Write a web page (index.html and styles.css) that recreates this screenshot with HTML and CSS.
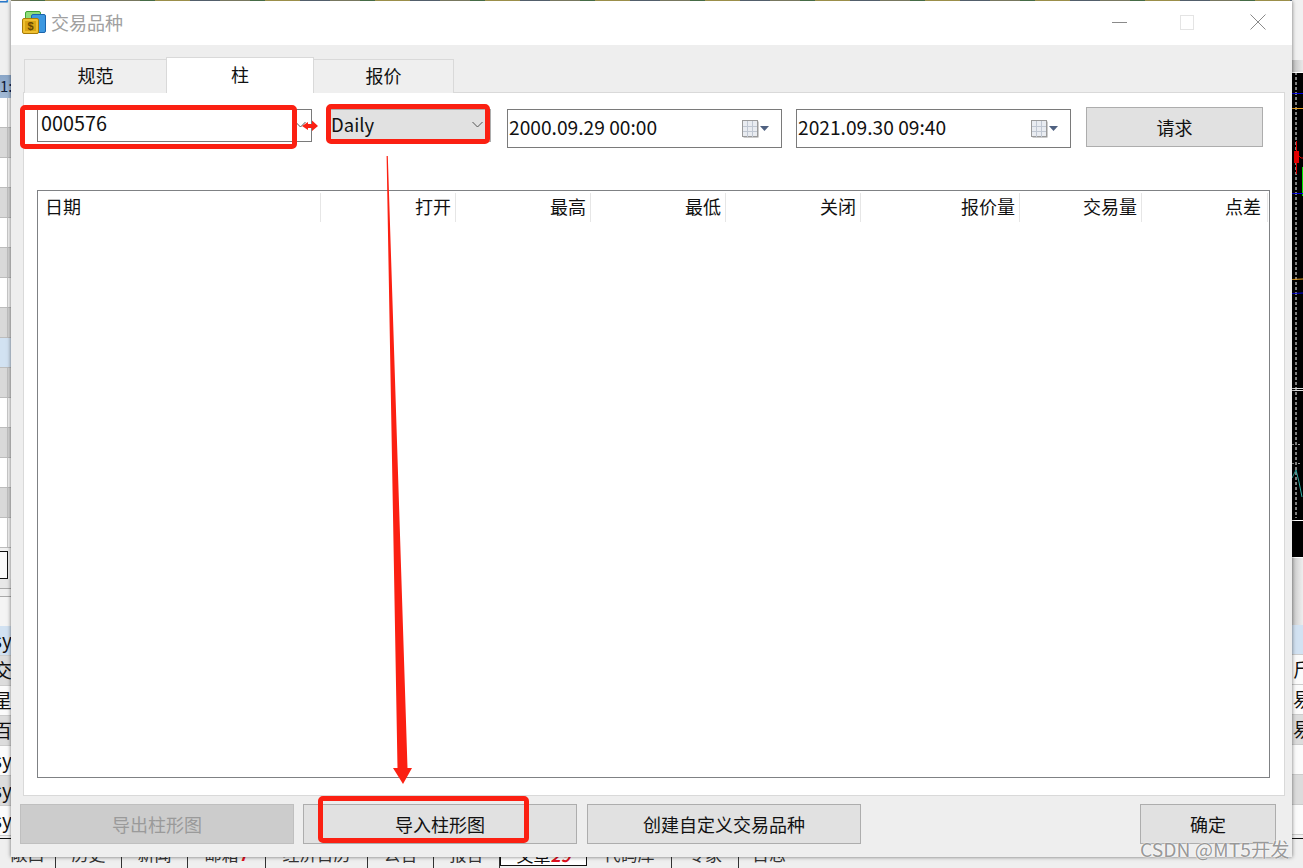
FILE: index.html
```html
<!DOCTYPE html>
<html lang="zh-CN">
<head>
<meta charset="utf-8">
<title>交易品种</title>
<link rel="stylesheet" href="styles.css">
</head>
<body>
<div class="desk">
  <div class="topline"></div>
  <div class="strip strip-left">
    <div class="top-bits"><span class="blue-glyph">尸</span></div>
    <div class="list-head">1:</div>
    <div class="row"></div><div class="row g"></div><div class="row"></div><div class="row g"></div><div class="row"></div><div class="row g"></div><div class="row"></div><div class="row g"></div><div class="row b"></div><div class="row g"></div><div class="row"></div><div class="row g"></div><div class="row"></div><div class="row g"></div><div class="row"></div>
    <div class="mini-box"></div>
    <div class="rule-block"></div>
    <div class="log-row b">sy</div>
    <div class="log-row g">交易</div>
    <div class="log-row">星期</div>
    <div class="log-row g">百利</div>
    <div class="log-row">sy</div>
    <div class="log-row g">sy</div>
    <div class="log-row">sy</div>
  </div>
  <div class="strip strip-right">
    <div class="chart-top"></div>
    <div class="chart">
      <svg class="chart-svg" width="11" height="486" viewBox="0 0 11 486">
        <rect x="0" y="0" width="11" height="486" fill="#000"/>
        <line x1="0" y1="0.5" x2="11" y2="0.5" stroke="#fff"/>
        <line x1="4" y1="0" x2="4" y2="446" stroke="#fff" stroke-dasharray="3 2"/>
        <line x1="0" y1="21.5" x2="11" y2="21.5" stroke="#0000e0"/>
        <line x1="0" y1="36.5" x2="11" y2="36.5" stroke="#e8a020"/>
        <line x1="4.5" y1="69" x2="4.5" y2="102" stroke="#e00000"/>
        <rect x="2" y="79" width="5" height="12" fill="#e60000"/>
        <path d="M7 84 L9 86 L11 86" stroke="#e00000" fill="none"/>
        <rect x="10" y="95" width="1" height="29" fill="#00e000"/>
        <line x1="0" y1="121.5" x2="11" y2="121.5" stroke="#0000e0"/>
        <line x1="0" y1="207.5" x2="11" y2="207" stroke="#e8a020"/>
        <line x1="0" y1="221.5" x2="11" y2="221" stroke="#0000e0"/>
        <line x1="0" y1="316.5" x2="11" y2="316.5" stroke="#ddd"/>
        <line x1="0" y1="318.5" x2="11" y2="318.5" stroke="#ddd"/>
        <line x1="0" y1="372.5" x2="11" y2="372.5" stroke="#999" stroke-dasharray="2 4"/>
        <line x1="0" y1="391.5" x2="11" y2="391.5" stroke="#999" stroke-dasharray="2 4"/>
        <path d="M0 406 L4 398 L7 410 L10 425" stroke="#2fa8a0" fill="none"/>
        <line x1="0" y1="448.5" x2="11" y2="448.5" stroke="#fff"/>
        <line x1="0" y1="485.5" x2="11" y2="485.5" stroke="#fff"/>
      </svg>
    </div>
    <div class="spacer-right"></div>
    <div class="log-row b"></div>
    <div class="log-row"><span class="log-r">斤</span></div>
    <div class="log-row"><span class="log-r">易</span></div>
    <div class="log-row g"><span class="log-r">易</span></div>
    <div class="log-row"></div>
    <div class="log-row g"></div>
    <div class="log-row"></div>
  </div>
  <div class="bottom-tabs">
    <span class="btab w55">敞口</span>
    <span class="btab w66">历史</span>
    <span class="btab w66">新闻</span>
    <span class="btab w78">邮箱<b>7</b></span>
    <span class="btab w102">经济日历</span>
    <span class="btab w66">公告</span>
    <span class="btab w66">报告</span>
    <span class="btab active">文章<b>29</b></span>
    <span class="btab w85">代码库</span>
    <span class="btab w67">专家</span>
    <span class="btab last">日志</span>
  </div>

  <div class="dialog">
    <header class="titlebar">
      <svg class="app-icon" width="25" height="25" viewBox="0 0 25 25">
        <rect x="3.5" y="1.5" width="15" height="14" rx="1.5" fill="#8fdc7a" stroke="#3fa336"/>
        <rect x="9.5" y="4.5" width="14" height="18" rx="1.5" fill="#3d98e0" stroke="#1b64ac"/>
        <rect x="0.5" y="8.5" width="16" height="15" rx="1.5" fill="#f0c030" stroke="#a87c08"/>
        <rect x="3" y="11" width="11" height="10" fill="#d8a414"/>
        <text x="8.5" y="20" class="dollar">$</text>
      </svg>
      <span class="title">交易品种</span>
      <div class="controls">
        <span class="ctl-min"></span>
        <span class="ctl-max"></span>
        <svg class="ctl-close" width="16" height="16" viewBox="0 0 16 16"><path d="M0.5 0.5 L15.5 15.5 M15.5 0.5 L0.5 15.5" stroke="#8a8a8a" fill="none"/></svg>
      </div>
    </header>
    <div class="content">
      <nav class="tabs">
        <span class="tab t1">规范</span>
        <span class="tab on">柱</span>
        <span class="tab t3">报价</span>
      </nav>
      <section class="panel">
        <div class="toolbar">
          <div class="combo symbol"><span class="val">000576</span>
            <svg class="chev" width="11" height="7" viewBox="0 0 11 7"><path d="M0.5 1 L5.5 6 L10.5 1" fill="none" stroke="#555"/></svg>
          </div>
          <div class="combo period"><span class="val">Daily</span>
            <svg class="chev" width="11" height="7" viewBox="0 0 11 7"><path d="M0.5 1 L5.5 6 L10.5 1" fill="none" stroke="#555"/></svg>
          </div>
          <div class="date d1"><span class="val">2000.09.29 00:00</span>
            <svg width="28" height="18" viewBox="0 0 28 18" class="cal"><rect x="1.5" y="1.5" width="15" height="16" fill="#9a9a9a"/><rect x="0.5" y="0.5" width="15" height="16" fill="#e9ecf1" stroke="#9a9a9a"/><path d="M5.5 1V17M10.5 1V17M1 6.5H15M1 11.5H15" stroke="#c0c7d2"/><path d="M18 6H27L22.5 11Z" fill="#4f6180"/></svg>
          </div>
          <div class="date d2"><span class="val">2021.09.30 09:40</span>
            <svg width="28" height="18" viewBox="0 0 28 18" class="cal"><rect x="1.5" y="1.5" width="15" height="16" fill="#9a9a9a"/><rect x="0.5" y="0.5" width="15" height="16" fill="#e9ecf1" stroke="#9a9a9a"/><path d="M5.5 1V17M10.5 1V17M1 6.5H15M1 11.5H15" stroke="#c0c7d2"/><path d="M18 6H27L22.5 11Z" fill="#4f6180"/></svg>
          </div>
          <button class="btn req">请求</button>
        </div>
        <div class="table">
          <div class="thead">
            <span class="th c-date">日期</span>
            <span class="th c135">打开</span>
            <span class="th c135">最高</span>
            <span class="th c135">最低</span>
            <span class="th c135">关闭</span>
            <span class="th c159">报价量</span>
            <span class="th c122">交易量</span>
            <span class="th c126">点差</span>
          </div>
        </div>
      </section>
      <footer class="actions">
        <button class="btn wide off">导出柱形图</button>
        <button class="btn wide">导入柱形图</button>
        <button class="btn wide">创建自定义交易品种</button>
        <button class="btn ok">确定</button>
      </footer>
    </div>
  </div>

  <div class="mark m1"></div>
  <div class="mark m2"></div>
  <div class="mark m3"></div>
  <svg class="arrows" width="1303" height="868" viewBox="0 0 1303 868">
    <path d="M386.6 156 L387.8 156 L407.5 768 L412 768 L403 784 L393 768 L397.5 768 Z" fill="#fb2012"/>
    <path d="M302 126 L308 122 L308 124 L312 124 L312 120.5 L318 126 L312 131 L312 128 L308 128 L308 130 Z" fill="#fb2012"/>
  </svg>
  <div class="watermark">CSDN @MT5开发</div>
</div>
</body>
</html>
```
FILE: styles.css
```css
* { box-sizing: border-box; }
html, body { margin: 0; padding: 0; }
body { width: 1303px; height: 868px; overflow: hidden; background: #e9e9e9; font-family: "Noto Sans CJK SC", "Noto Sans", sans-serif; color: #111; }
.desk { position: relative; width: 1303px; height: 868px; overflow: hidden; }

/* application behind the dialog */
.topline { position: absolute; left: 0; top: 0; width: 1303px; height: 1px; background: repeating-linear-gradient(90deg, #9a9a7a 0 30px, #5a8a5a 30px 45px, #c8b860 45px 80px, #6a7a8a 80px 110px); }
.strip { position: absolute; top: 0; width: 11px; height: 868px; overflow: hidden; display: flex; flex-direction: column; background: #f1f1f1; }
.strip-left { left: 0; }
.strip-right { right: 0; }
.top-bits { height: 75px; flex: none; background: #f0f0f0; }
.blue-glyph { display: block; color: #2a78c8; font-size: 18px; line-height: 18px; margin-top: -6px; margin-left: -8px; }
.list-head { height: 23px; flex: none; background: linear-gradient(#8aa6c8, #a4bbd6); font-size: 15px; line-height: 22px; color: #10203a; }
.row { height: 30px; flex: none; background: linear-gradient(90deg, #fff 0 7px, #c8c8c8 7px 8px, #f4f4f4 8px); border-bottom: 1px solid #bdbdbd; }
.row.g { background: linear-gradient(90deg, #d9d9d9 0 7px, #c0c0c0 7px 8px, #d4d4d4 8px); }
.row.b { background: #d2e2f2; }
.mini-box { height: 28px; width: 8px; flex: none; background: #fafafa; border: 1px solid #111; border-left: 0; margin-top: 3px; }
.rule-block { height: 47px; flex: none; background: linear-gradient(#e8e8e8 0 9px, #aaa 9px 10px, #efefef 10px 17px, #aaa 17px 18px, #f4f4f4 18px); }
.log-row { height: 30px; flex: none; background: #fbfbfb; font-size: 19px; line-height: 28px; white-space: nowrap; overflow: hidden; border-bottom: 1px solid #ccc; margin-left: -7px; }
.log-row.g { background: #dcdcdc; }
.log-row.b { background: #d2e2f2; }
.strip-right .log-row { margin-left: 0; }
.log-r { display: block; margin-left: 1px; }
.chart-top { height: 12px; flex: none; margin-top: 60px; background: linear-gradient(90deg, #c0c0c0, #e8e8e8); }
.chart { height: 486px; flex: none; }
.chart-svg { display: block; }
.spacer-right { height: 67px; flex: none; background: linear-gradient(90deg, #c8c8c8, #eee); }
.bottom-tabs { position: absolute; left: 0; top: 838px; width: 1303px; height: 30px; display: flex; align-items: stretch; border-top: 1px solid #111; background: #efefef; font-size: 17px; color: #333; }
.btab { display: block; flex: none; text-align: center; line-height: 29px; border-right: 1px solid #333; }
.btab b { color: #e01020; font-weight: 700; font-style: italic; }
.w55 { width: 56px; } .w66 { width: 66px; } .w78 { width: 78px; } .w102 { width: 102px; } .w85 { width: 85px; } .w67 { width: 67px; }
.btab.active { width: 87px; background: #fff; border: 1px solid #111; color: #111; margin-bottom: 2px; }
.btab.last { width: 60px; border-right: 0; }

/* dialog */
.dialog { position: absolute; left: 11px; top: 1px; width: 1281px; height: 856px; background: #eee; box-shadow: 0 0 4px rgba(0,0,0,.55); display: flex; flex-direction: column; }
.titlebar { height: 44px; flex: none; background: #fff; display: flex; align-items: center; padding: 0 0 2px 11px; }
.app-icon { flex: none; }
.title { margin-left: 4px; font-size: 18px; color: #a0a0a0; line-height: 24px; }
.controls { margin-left: auto; display: flex; align-items: center; }
.ctl-min { display: block; width: 15px; height: 1px; background: #8a8a8a; margin-right: 55px; }
.ctl-max { display: block; width: 14px; height: 15px; border: 1px solid #e4e4e4; margin-right: 57px; margin-left: -2px; }
.ctl-close { display: block; margin-right: 26px; margin-left: -1px; }
.content { flex: 1; display: flex; flex-direction: column; padding: 13px 7px 0 12px; }
.tabs { display: flex; height: 35px; flex: none; padding-left: 1px; align-items: flex-end; position: relative; z-index: 1; margin-bottom: -1px; }
.tab { display: block; text-align: center; font-size: 18px; }
.t1 { width: 142px; height: 34px; line-height: 31px; background: #efefef; border: 1px solid #d9d9d9; border-bottom: 0; border-right: 0; }
.on { width: 148px; height: 36px; line-height: 32px; background: #fff; border: 1px solid #d9d9d9; border-bottom: 0; }
.t3 { width: 140px; height: 34px; line-height: 31px; background: #efefef; border: 1px solid #d9d9d9; border-bottom: 0; border-left: 0; }
.panel { height: 704px; flex: none; background: #fff; border: 1px solid #d9d9d9; padding: 14px 0 0 13px; }
.toolbar { display: flex; align-items: flex-start; height: 41px; }
.combo { height: 33px; margin-top: 2px; display: flex; align-items: center; justify-content: space-between; border: 1px solid #7a7a7a; }
.symbol { width: 275px; background: #fff; padding: 0 5px 0 3px; font-size: 19.8px; }
.symbol .val { margin-bottom: 5px; }
.period { width: 164px; margin-left: 15px; background: #e1e1e1; border-color: #adadad; padding: 0 7px 0 3px; font-size: 18.5px; }
.period .val { margin-bottom: 4px; }
.val { display: block; white-space: nowrap; line-height: 26px; }
.chev { display: block; flex: none; margin-bottom: 3px; }
.date { width: 275px; height: 39px; margin-top: 2px; display: flex; align-items: center; justify-content: space-between; border: 1px solid #7a7a7a; background: #fff; font-size: 19.2px; padding: 0 11px 0 1px; }
.date .val { margin-bottom: 3px; }
.d1 { margin-left: 16px; }
.d2 { margin-left: 14px; }
.cal { display: block; flex: none; }
.btn { display: block; background: #e1e1e1; border: 1px solid #adadad; font: 18px "Noto Sans CJK SC", "Noto Sans", sans-serif; color: #111; padding: 0; }
.req { width: 177px; height: 40px; margin-left: 15px; }
.table { width: 1233px; height: 588px; margin-top: 42px; border: 1px solid #7f8184; background: #fff; }
.thead { display: flex; height: 31px; padding-top: 2px; }
.th { display: block; height: 29px; line-height: 27px; font-size: 18px; text-align: right; padding-right: 4px; border-right: 1px solid #e6e6e6; flex: none; }
.c-date { width: 283px; text-align: left; padding-left: 7px; }
.c135 { width: 135px; }
.c159 { width: 159px; }
.c122 { width: 122px; }
.c126 { width: 126px; padding-right: 6px; }
.actions { display: flex; padding-top: 8px; margin-left: -3px; height: 48px; align-items: flex-start; gap: 9px; }
.wide { width: 274px; height: 40px; }
.wide:nth-child(3) { margin-left: 1px; }
.off { background: #ccc; border-color: #bfbfbf; color: #9a9a9a; }
.ok { width: 136px; height: 40px; margin-left: auto; margin-right: 9px; }

/* annotations */
.mark { position: absolute; border: 5px solid #fb2012; border-radius: 5px; }
.m1 { left: 20px; top: 105px; width: 277px; height: 44px; }
.m2 { left: 326px; top: 104px; width: 164px; height: 40px; }
.m3 { left: 318px; top: 796px; width: 211px; height: 47px; }
.arrows { position: absolute; left: 0; top: 0; }
.watermark { position: absolute; left: 1140px; top: 836px; font: 19.3px/26px "Noto Sans CJK SC", "Noto Sans", sans-serif; color: rgba(125,125,125,.8); text-shadow: 0 0 2px #fff, 0 0 1px #fff; white-space: nowrap; }
.dollar { font: bold 11px "Liberation Sans", sans-serif; fill: #6a4a00; text-anchor: middle; }
```
